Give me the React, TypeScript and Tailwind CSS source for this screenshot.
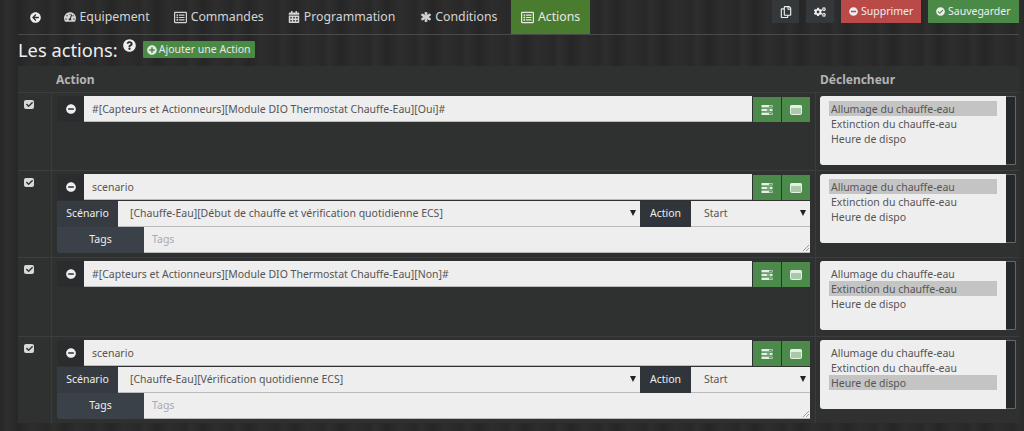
import { ReactNode } from 'react'
import {
  FaArrowCircleLeft,
  FaTachometerAlt,
  FaRegListAlt,
  FaCalendarAlt,
  FaAsterisk,
  FaRegCopy,
  FaCogs,
  FaMinusCircle,
  FaCheckCircle,
  FaPlusCircle,
  FaQuestionCircle,
  FaCheck,
} from 'react-icons/fa'

const triggers = ['Allumage du chauffe-eau', 'Extinction du chauffe-eau', 'Heure de dispo']

function Tab({ icon, label, padding, active }: { icon: ReactNode; label?: string; padding: string; active?: boolean }) {
  return (
    <div className={`flex items-center gap-[4px] h-[34px] text-[12.3px] ${padding} ${active ? 'bg-[#4a7c2f] text-[#e8e8e8]' : 'text-[#d4d4d4]'}`}>
      {icon}
      {label && <span>{label}</span>}
    </div>
  )
}

function Arrow() {
  return <span className="absolute right-[4px] top-[9px] w-0 h-0 border-x-[3.5px] border-t-[6px] border-x-transparent border-t-[#222]" />
}

function TasksIcon() {
  return (
    <svg width="12" height="10" viewBox="0 0 12 10">
      <rect x="0.5" y="0" width="11" height="2.4" fill="#e6efe6" />
      <rect x="0.5" y="3.8" width="11" height="2.4" fill="#e6efe6" />
      <rect x="0.5" y="7.6" width="11" height="2.4" fill="#e6efe6" />
      <rect x="8" y="0.6" width="3" height="1.2" fill="#4b8a4b" />
      <rect x="6" y="4.4" width="3" height="1.2" fill="#4b8a4b" />
      <rect x="8" y="8.2" width="3" height="1.2" fill="#4b8a4b" />
    </svg>
  )
}

function WindowIcon() {
  return (
    <svg width="12" height="10" viewBox="0 0 12 10">
      <rect x="0.5" y="0.5" width="11" height="9" rx="1" fill="#a9c9a9" stroke="#e6efe6" />
      <rect x="0.5" y="0.5" width="11" height="2.5" fill="#e6efe6" />
    </svg>
  )
}

function Select({ triggerIndex }: { triggerIndex: number }) {
  return (
    <div className="relative h-[69px] w-[196px] bg-[#eeeeee] rounded-[3px] pl-[9px] pt-[5px] text-[10.5px] leading-[16px] text-[#555]">
      {triggers.map((t, i) => (
        <div key={t} className={`h-[15px] w-[168px] pl-[2px] ${i === triggerIndex ? 'bg-[#c4c4c4]' : ''}`}>{t}</div>
      ))}
      <div className="absolute right-0 top-0 w-[10px] h-full bg-[#24282b] border-y border-r border-[#666] rounded-r-[2px]" />
    </div>
  )
}

function MainLine({ value }: { value: string }) {
  return (
    <div className="flex h-[26px]">
      <div className="flex items-center justify-center w-[27px] bg-[#2a2c2e] rounded-l-[3px] text-[#eee] text-[10px]">
        <FaMinusCircle />
      </div>
      <div className="flex items-center w-[668px] bg-[#eeeeee] border-b border-[#bbb] pl-[8px] pt-[2px] text-[10.5px] text-[#555]">{value}</div>
      <div className="flex gap-px ml-px">
        <div className="flex items-center justify-center w-[28px] h-[25px] mt-px bg-[#4b8a4b]"><TasksIcon /></div>
        <div className="flex items-center justify-center w-[28px] h-[25px] mt-px bg-[#4b8a4b]"><WindowIcon /></div>
      </div>
    </div>
  )
}

function ScenarioLines({ name }: { name: string }) {
  return (
    <div className="flex flex-col mt-px w-[753px]">
      <div className="flex h-[26px] text-[10.5px]">
        <div className="flex items-center justify-center w-[61px] bg-[#353b41] text-[#eee]">Scénario</div>
        <div className="relative flex items-center w-[522px] bg-[#eeeeee] border-b border-[#bbb] pl-[12px] text-[#555]">
          {name}
          <Arrow />
        </div>
        <div className="flex items-center justify-center w-[51px] bg-[#2f353a] text-[#eee]">Action</div>
        <div className="relative flex items-center flex-1 bg-[#eeeeee] border-b border-[#bbb] pl-[13px] text-[#555]">
          Start
          <Arrow />
        </div>
      </div>
      <div className="flex h-[26px] text-[10.5px]">
        <div className="flex items-center justify-center w-[87px] bg-[#3a4148] text-[#eee] rounded-bl-[3px]">Tags</div>
        <div className="relative flex items-center flex-1 bg-[#eeeeee] border-b border-[#bbb] pl-[8px] text-[#aaa]">
          Tags
          <svg className="absolute right-[1px] bottom-[1px]" width="7" height="7" viewBox="0 0 7 7">
            <path d="M1 7L7 1M4 7L7 4" stroke="#888" strokeWidth="0.8" />
          </svg>
        </div>
      </div>
    </div>
  )
}

function Row({ value, scenario, trigger, height }: { value: string; scenario?: string; trigger: number; height: string }) {
  return (
    <div className={`flex border-t border-[#3c3e3e] ${height}`}>
      <div className="w-[34px] border-r border-[#3a3c3c] pt-[7px] pl-[6px]">
        <div className="flex items-center justify-center w-[10px] h-[9px] bg-[#d8d8d8] rounded-[2px] text-[#333] text-[7px]"><FaCheck /></div>
      </div>
      <div className="w-[763px] pl-[5px] pt-[3px]">
        <MainLine value={value} />
        {scenario && <ScenarioLines name={scenario} />}
      </div>
      <div className="pl-[4px] pt-[3px] border-l border-[#3a3c3c]">
        <Select triggerIndex={trigger} />
      </div>
    </div>
  )
}

export default function App() {
  return (
    <div className="w-[1024px] h-[431px] overflow-hidden bg-[#2b2b2b] bg-[repeating-linear-gradient(90deg,#272727_0px,#2e2e2e_7px,#262626_19px,#2d2d2d_31px,#292929_46px)] font-['Noto_Sans','Open_Sans',sans-serif] pl-[18px]">
      <div className="flex justify-between w-[1001px] h-[35px] border-b border-[#4a4a4a]">
        <div className="flex">
          <Tab padding="pl-[11.5px] pr-[10.5px]" icon={<FaArrowCircleLeft className="text-[11px] text-[#eee]" />} />
          <Tab padding="pl-[12.5px] pr-[11.5px]" icon={<FaTachometerAlt className="text-[12px]" />} label="Equipement" />
          <Tab padding="pl-[12.5px] pr-[11.5px]" icon={<FaRegListAlt className="text-[13px]" />} label="Commandes" />
          <Tab padding="pl-[12.5px] pr-[13.5px]" icon={<FaCalendarAlt className="text-[12px]" />} label="Programmation" />
          <Tab padding="pl-[12.5px] pr-[13.5px]" icon={<FaAsterisk className="text-[10px] stroke-current stroke-[50]" />} label="Conditions" />
          <Tab padding="px-[10px]" icon={<FaRegListAlt className="text-[13px]" />} label="Actions" active />
        </div>
        <div className="flex gap-[7px] h-[23px] text-[10.5px] text-[#eee]">
          <div className="flex items-center justify-center w-[27px] bg-[#35383a] text-[12px]"><FaRegCopy /></div>
          <div className="flex items-center justify-center w-[28px] bg-[#35383a] text-[12px]"><FaCogs /></div>
          <div className="flex items-center gap-[3px] w-[80px] pl-[8px] bg-[#b94a48]"><FaMinusCircle className="text-[9px]" />Supprimer</div>
          <div className="flex items-center gap-[3px] w-[91px] pl-[8px] bg-[#4b8a46]"><FaCheckCircle className="text-[9px]" />Sauvegarder</div>
        </div>
      </div>
      <div className="flex items-center h-[31px] pb-[2px]">
        <span className="text-[18.3px] text-[#eee]">Les actions:</span>
        <FaQuestionCircle className="text-[13px] text-[#eee] ml-[5px] mb-[9px]" />
        <div className="flex items-center gap-[2px] h-[17px] ml-[7px] px-[4px] bg-[#4b8a46] text-[#e8e8e8] text-[10.5px] rounded-[1px]">
          <FaPlusCircle className="text-[10px]" />
          Ajouter une Action
        </div>
      </div>
      <div className="w-[1001px] h-[357px] bg-[#2f3131]">
        <div className="flex h-[26px] items-center pt-[1px] text-[12px] font-bold text-[#b4b4b4]">
          <div className="w-[38px] h-full" />
          <div className="w-[764px]">Action</div>
          <div>Déclencheur</div>
        </div>
        <Row value="#[Capteurs et Actionneurs][Module DIO Thermostat Chauffe-Eau][Oui]#" trigger={0} height="h-[78px]" />
        <Row value="scenario" scenario="[Chauffe-Eau][Début de chauffe et vérification quotidienne ECS]" trigger={0} height="h-[87px]" />
        <Row value="#[Capteurs et Actionneurs][Module DIO Thermostat Chauffe-Eau][Non]#" trigger={1} height="h-[79px]" />
        <Row value="scenario" scenario="[Chauffe-Eau][Vérification quotidienne ECS]" trigger={2} height="h-[87px]" />
      </div>
    </div>
  )
}
